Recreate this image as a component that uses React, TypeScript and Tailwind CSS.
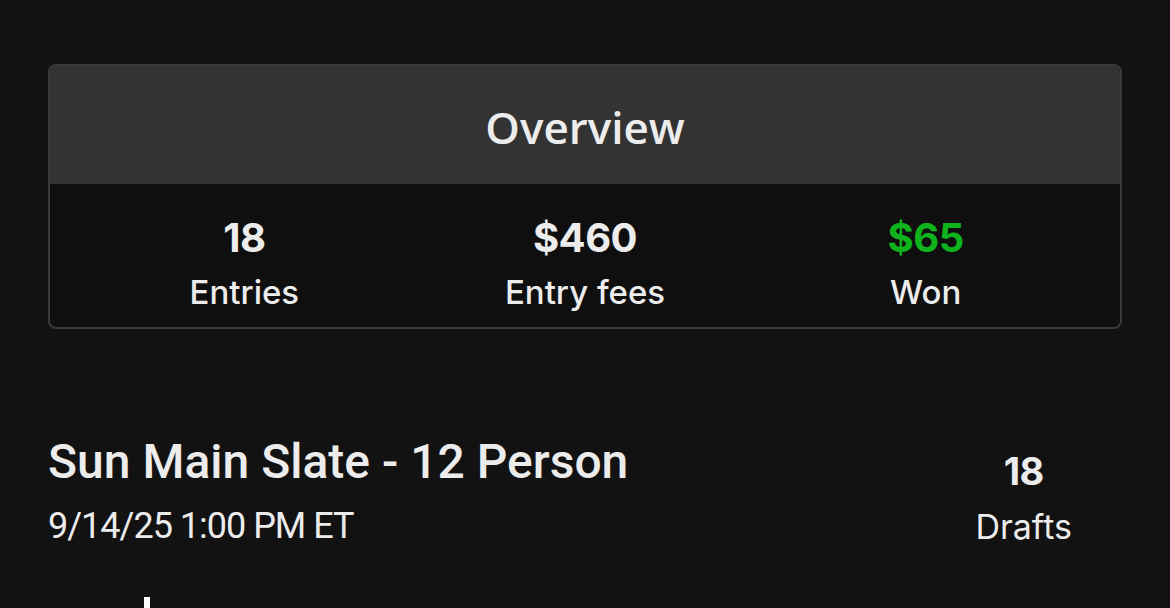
import React from "react";

const stats = [
  { value: "18", label: "Entries", green: false },
  { value: "$460", label: "Entry fees", green: false },
  { value: "$65", label: "Won", green: true },
];

export default function App() {
  return (
    <div className="min-h-[608px] w-full overflow-hidden bg-[#121212] text-[#ececec]">
      <div className="px-12 pt-16">
        {/* Overview card */}
        <div className="overflow-hidden rounded-[8px] border-2 border-[#3a3a3a] bg-[#0f0f0f]">
          <div className="flex h-[118px] items-center justify-center bg-[#333333]">
            <span className="mt-[3px] font-['Open_Sans',sans-serif] text-[44px] font-semibold leading-none">
              Overview
            </span>
          </div>
          <div className="grid grid-cols-3 px-6 pt-[30px] pb-[15px] font-['Inter',sans-serif]">
            {stats.map((s) => (
              <div key={s.label} className="flex flex-col items-center">
                <span
                  className={`text-[40px] font-bold leading-[48px] tracking-[-0.5px] ${
                    s.green ? "text-[#0fb31c]" : "text-[#ececec]"
                  }`}
                >
                  {s.value}
                </span>
                <span className="mt-[10px] text-[33px] font-medium leading-[40px]">{s.label}</span>
              </div>
            ))}
          </div>
        </div>

        {/* Slate row */}
        <div className="mt-[105px] flex items-start justify-between">
          <div className="flex flex-col font-['Roboto',sans-serif]">
            <span className="text-[48px] font-medium leading-[56px]">Sun Main Slate - 12 Person</span>
            <span className="mt-[16px] text-[36px] leading-[40px] tracking-[-1px]">9/14/25 1:00 PM ET</span>
          </div>
          <div className="mr-[50px] mt-[14px] flex flex-col items-center font-['Inter',sans-serif]">
            <span className="text-[38px] font-bold leading-[46px] tracking-[-0.5px]">18</span>
            <span className="mt-[12px] text-[34px] leading-[42px]">Drafts</span>
          </div>
        </div>

        <div className="mt-[49px] ml-[96px] h-[14px] w-[6px] bg-white" />
      </div>
    </div>
  );
}
